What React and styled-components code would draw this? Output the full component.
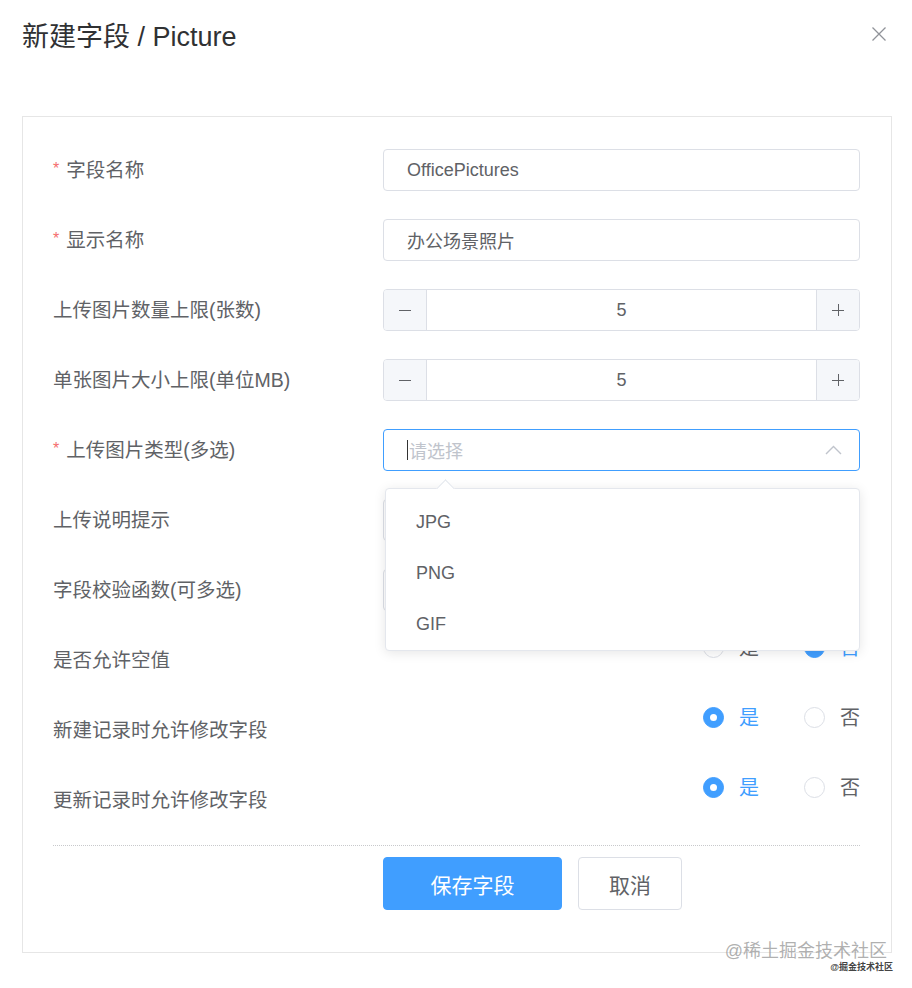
import styled, { createGlobalStyle } from "styled-components";

const GlobalStyle = createGlobalStyle`
    body {
        margin: 0;
        background: #fff;
        font-family: "Liberation Sans", Arial, "Noto Sans CJK SC", sans-serif;
    }
`;

const Page = styled.div`
    position: relative;
    box-sizing: border-box;
    width: 912px;
    height: 988px;
    padding: 20px 20px 0 22px;
    overflow: hidden;
`;

const Header = styled.div`
    display: flex;
    justify-content: space-between;
    align-items: center;
    height: 34px;
    margin-bottom: 62px;
`;

const Title = styled.h2`
    margin: 0;
    font-size: 27px;
    font-weight: normal;
    color: #303133;
    line-height: 34px;
`;

const CloseButton = styled.button`
    display: flex;
    align-items: center;
    justify-content: center;
    padding: 0;
    margin: -6px 5px 0 0;
    border: none;
    background: none;
    cursor: pointer;
`;

const Card = styled.div`
    box-sizing: border-box;
    width: 870px;
    border: 1px solid #e6e6e6;
    padding: 32px 31px 42px 30px;
`;

const FormRow = styled.div`
    display: grid;
    grid-template-columns: 330px 1fr;
    height: 42px;
    margin-bottom: ${(p) => (p.$last ? "0" : "28px")};
`;

const Label = styled.div`
    display: flex;
    align-items: center;
    font-size: 19.5px;
    color: #606266;
    margin-top: -3px;
`;

const Star = styled.span`
    color: #f56c6c;
    font-size: 16px;
    margin-right: 7px;
`;

const Field = styled.div`
    position: relative;
    display: flex;
    align-items: ${(p) => (p.$top ? "flex-start" : "stretch")};
    justify-content: ${(p) => (p.$end ? "flex-end" : "flex-start")};
`;

const TextInput = styled.div`
    box-sizing: border-box;
    flex: 1;
    display: flex;
    align-items: center;
    border: 1px solid ${(p) => (p.$focus ? "#409eff" : "#dcdfe6")};
    border-radius: 4px;
    padding: 0 23px;
    font-size: 18px;
    color: ${(p) => (p.$placeholder ? "#c0c4cc" : "#606266")};
`;

const Caret = styled.span`
    width: 1px;
    height: 20px;
    background: #333;
    margin-right: 1px;
`;

const SelectArrow = styled.span`
    margin-left: auto;
    margin-right: -6px;
    display: flex;
`;

const NumberInput = styled.div`
    box-sizing: border-box;
    flex: 1;
    display: grid;
    grid-template-columns: 43px 1fr 43px;
    border: 1px solid #dcdfe6;
    border-radius: 4px;
    overflow: hidden;
`;

const StepButton = styled.span`
    display: flex;
    align-items: center;
    justify-content: center;
    background: #f5f7fa;
    border-left: ${(p) => (p.$side === "right" ? "1px solid #dcdfe6" : "none")};
    border-right: ${(p) => (p.$side === "left" ? "1px solid #dcdfe6" : "none")};
`;

const NumberValue = styled.span`
    display: flex;
    align-items: center;
    justify-content: center;
    font-size: 18px;
    color: #606266;
`;

const Popper = styled.div`
    position: absolute;
    top: 59px;
    left: 2px;
    width: 475px;
    box-sizing: border-box;
    padding: 8px 0 0;
    background: #fff;
    border: 1px solid #e4e7ed;
    border-radius: 4px;
    box-shadow: 0 2px 12px rgba(0, 0, 0, 0.1);
    z-index: 10;

    &::before {
        content: "";
        position: absolute;
        top: -7px;
        left: 53px;
        width: 12px;
        height: 12px;
        background: #fff;
        border-top: 1px solid #e4e7ed;
        border-left: 1px solid #e4e7ed;
        transform: rotate(45deg);
    }
`;

const Option = styled.div`
    height: 51px;
    line-height: 51px;
    padding: 0 30px;
    font-size: 18px;
    color: #606266;
`;

const RadioGroup = styled.div`
    display: flex;
    gap: 45px;
    margin-top: -2px;
`;

const RadioOption = styled.label`
    display: flex;
    align-items: center;
    gap: 15px;
    font-size: 20px;
    line-height: 20px;
    color: ${(p) => (p.$checked ? "#409eff" : "#606266")};
`;

const RadioCircle = styled.span`
    box-sizing: border-box;
    width: 21px;
    height: 21px;
    border-radius: 50%;
    border: 1px solid ${(p) => (p.$checked ? "#409eff" : "#dcdfe6")};
    background: ${(p) => (p.$checked ? "#409eff" : "#fff")};
    display: flex;
    align-items: center;
    justify-content: center;

    &::after {
        content: "";
        width: 7px;
        height: 7px;
        border-radius: 50%;
        background: #fff;
        display: ${(p) => (p.$checked ? "block" : "none")};
    }
`;

const Divider = styled.div`
    margin-top: 24px;
    border-top: 1px dotted #c8c9cc;
`;

const Actions = styled.div`
    display: flex;
    gap: 16px;
    margin-top: 11px;
    padding-left: 330px;
`;

const Button = styled.button`
    box-sizing: border-box;
    height: 53px;
    width: ${(p) => p.$width}px;
    border-radius: 4px;
    border: 1px solid ${(p) => (p.$primary ? "#409eff" : "#dcdfe6")};
    background: ${(p) => (p.$primary ? "#409eff" : "#fff")};
    color: ${(p) => (p.$primary ? "#fff" : "#606266")};
    font-family: inherit;
    font-size: 21px;
    cursor: pointer;
`;

const Watermark = styled.div`
    position: absolute;
    right: 25px;
    top: 940px;
    text-align: right;
    pointer-events: none;
`;

const WatermarkMain = styled.div`
    font-size: 18px;
    line-height: 22px;
    color: rgba(150, 150, 150, 0.75);
`;

const WatermarkSmall = styled.div`
    font-size: 9px;
    line-height: 10px;
    color: #444;
    margin-right: -6px;
    font-weight: bold;
`;

function MinusIcon() {
    return (
        <svg width="14" height="14" viewBox="0 0 14 14">
            <line x1="1" y1="7.5" x2="13" y2="7.5" stroke="#606266" strokeWidth="1" />
        </svg>
    );
}

function PlusIcon() {
    return (
        <svg width="14" height="14" viewBox="0 0 14 14">
            <line x1="1" y1="7.5" x2="13" y2="7.5" stroke="#606266" strokeWidth="1" />
            <line x1="7.5" y1="1" x2="7.5" y2="13" stroke="#606266" strokeWidth="1" />
        </svg>
    );
}

function Radio({ checked, children }) {
    return (
        <RadioOption $checked={checked}>
            <RadioCircle $checked={checked} />
            {children}
        </RadioOption>
    );
}

function NumberField({ value }) {
    return (
        <NumberInput>
            <StepButton $side="left">
                <MinusIcon />
            </StepButton>
            <NumberValue>{value}</NumberValue>
            <StepButton $side="right">
                <PlusIcon />
            </StepButton>
        </NumberInput>
    );
}

export default function App() {
    const radioRows = [
        { label: "是否允许空值", value: "否" },
        { label: "新建记录时允许修改字段", value: "是" },
        { label: "更新记录时允许修改字段", value: "是" },
    ];

    return (
        <Page>
            <GlobalStyle />
            <Header>
                <Title>新建字段 / Picture</Title>
                <CloseButton aria-label="关闭">
                    <svg width="16" height="16" viewBox="0 0 16 16">
                        <path d="M1.5 1.5 L14.5 14.5 M14.5 1.5 L1.5 14.5" stroke="#909399" strokeWidth="1.3" fill="none" />
                    </svg>
                </CloseButton>
            </Header>
            <Card>
                <FormRow>
                    <Label><Star>*</Star>字段名称</Label>
                    <Field>
                        <TextInput>OfficePictures</TextInput>
                    </Field>
                </FormRow>
                <FormRow>
                    <Label><Star>*</Star>显示名称</Label>
                    <Field>
                        <TextInput>办公场景照片</TextInput>
                    </Field>
                </FormRow>
                <FormRow>
                    <Label>上传图片数量上限(张数)</Label>
                    <Field>
                        <NumberField value={5} />
                    </Field>
                </FormRow>
                <FormRow>
                    <Label>单张图片大小上限(单位MB)</Label>
                    <Field>
                        <NumberField value={5} />
                    </Field>
                </FormRow>
                <FormRow>
                    <Label><Star>*</Star>上传图片类型(多选)</Label>
                    <Field>
                        <TextInput $focus $placeholder>
                            <Caret />
                            请选择
                            <SelectArrow>
                                <svg width="17" height="10" viewBox="0 0 17 10">
                                    <polyline points="1,9 8.5,1.5 16,9" stroke="#c0c4cc" strokeWidth="1.4" fill="none" />
                                </svg>
                            </SelectArrow>
                        </TextInput>
                        <Popper>
                            <Option>JPG</Option>
                            <Option>PNG</Option>
                            <Option>GIF</Option>
                        </Popper>
                    </Field>
                </FormRow>
                <FormRow>
                    <Label>上传说明提示</Label>
                    <Field>
                        <TextInput />
                    </Field>
                </FormRow>
                <FormRow>
                    <Label>字段校验函数(可多选)</Label>
                    <Field>
                        <TextInput $placeholder />
                    </Field>
                </FormRow>
                {radioRows.map((row, i) => (
                    <FormRow key={row.label} $last={i === radioRows.length - 1}>
                        <Label>{row.label}</Label>
                        <Field $top $end>
                            <RadioGroup>
                                <Radio checked={row.value === "是"}>是</Radio>
                                <Radio checked={row.value === "否"}>否</Radio>
                            </RadioGroup>
                        </Field>
                    </FormRow>
                ))}
                <Divider />
                <Actions>
                    <Button $primary $width={179}>保存字段</Button>
                    <Button $width={104}>取消</Button>
                </Actions>
            </Card>
            <Watermark>
                <WatermarkMain>@稀土掘金技术社区</WatermarkMain>
                <WatermarkSmall>@掘金技术社区</WatermarkSmall>
            </Watermark>
        </Page>
    );
}
